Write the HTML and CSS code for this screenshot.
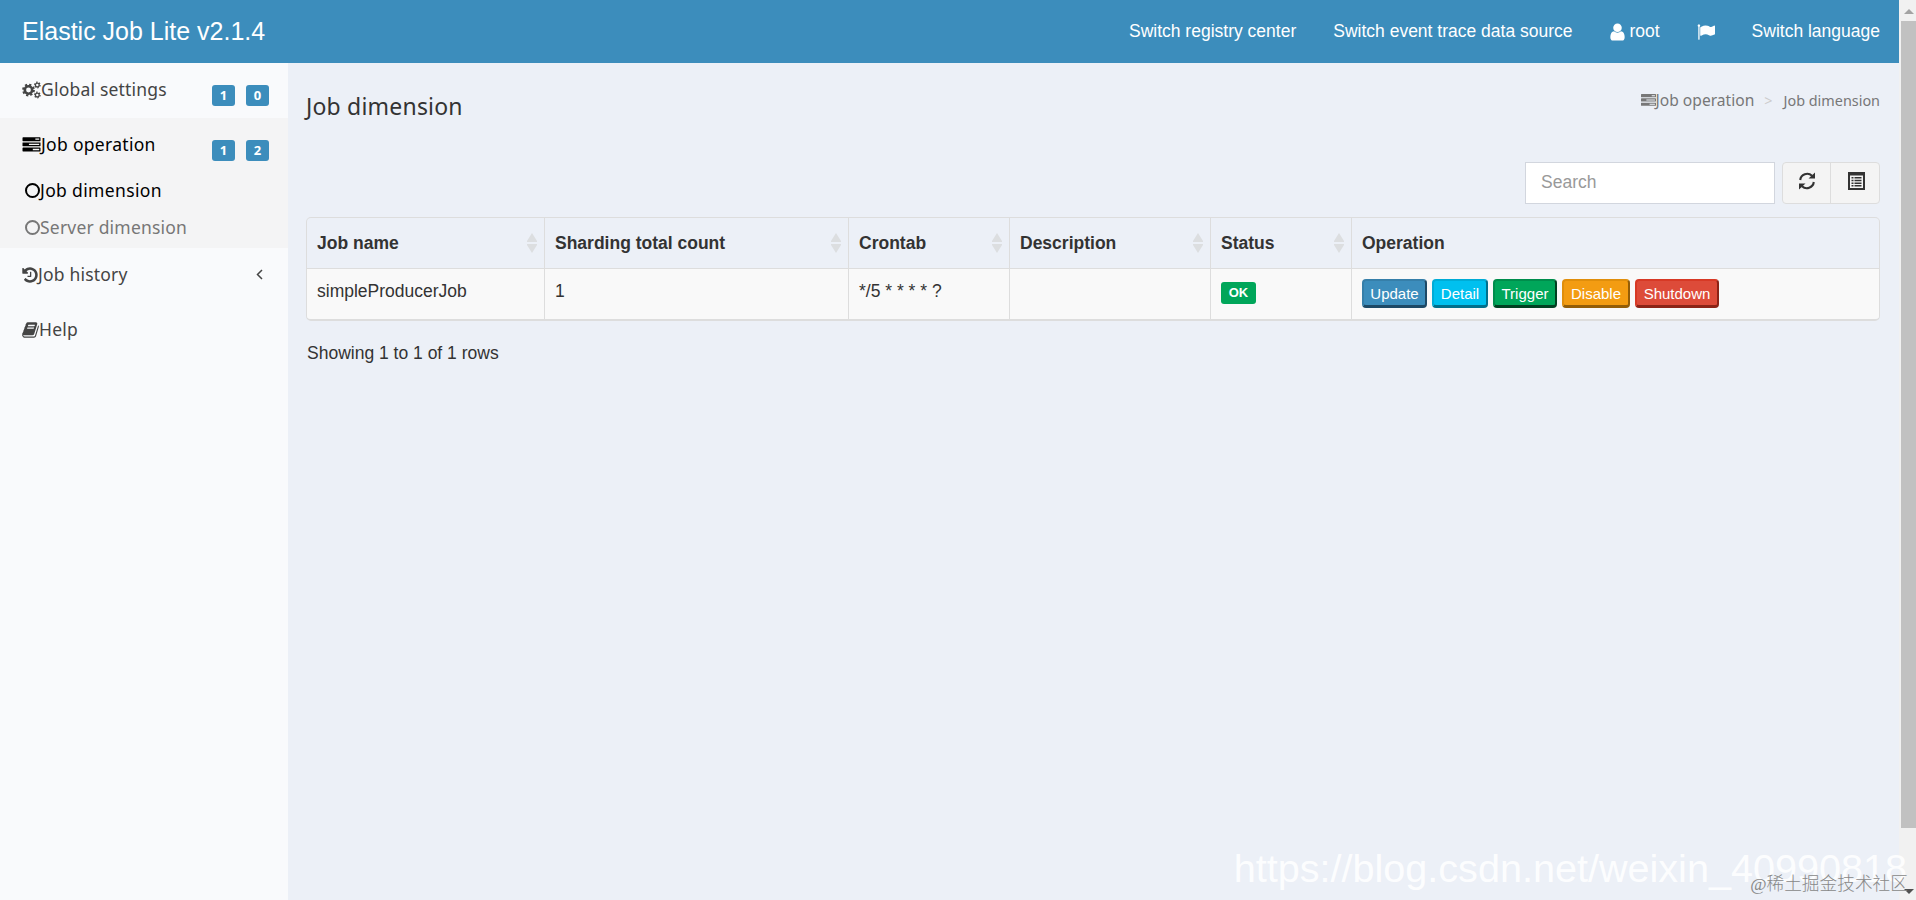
FILE: index.html
```html
<!DOCTYPE html>
<html lang="en">
<head>
    <meta charset="UTF-8">
    <meta name="viewport" content="width=device-width, initial-scale=1.0">
    <title>Elastic Job Lite</title>
    <link rel="stylesheet" href="styles.css">
</head>
<body>
    <!-- shared icons -->
    <svg class="defs">
        <symbol id="tasks" viewBox="0 0 1792 1792"><path d="M1024 1408h640v-128h-640v128zm-384-512h1024v-128h-1024v128zm640-512h384v-128h-384v128zm512 832v256q0 26-19 45t-45 19h-1664q-26 0-45-19t-19-45v-256q0-26 19-45t45-19h1664q26 0 45 19t19 45zm0-512v256q0 26-19 45t-45 19h-1664q-26 0-45-19t-19-45v-256q0-26 19-45t45-19h1664q26 0 45 19t19 45zm0-512v256q0 26-19 45t-45 19h-1664q-26 0-45-19t-19-45v-256q0-26 19-45t45-19h1664q26 0 45 19t19 45z"/></symbol>
        <symbol id="cogs" viewBox="0 0 19 18">
            <g fill="none" stroke="currentColor">
                <circle cx="6.5" cy="9" r="3.7" stroke-width="2.6"/>
                <circle cx="6.5" cy="9" r="5.4" stroke-width="2" stroke-dasharray="2.2 2.04"/>
                <circle cx="15.3" cy="4" r="1.9" stroke-width="1.3"/>
                <circle cx="15.3" cy="4" r="2.8" stroke-width="1.2" stroke-dasharray="1.4 1.53"/>
                <circle cx="15.3" cy="14" r="1.9" stroke-width="1.3"/>
                <circle cx="15.3" cy="14" r="2.8" stroke-width="1.2" stroke-dasharray="1.4 1.53"/>
            </g>
        </symbol>
        <symbol id="sort" viewBox="0 0 10 20"><path d="M5 0l5 8v1H0V8zM0 11h10v1l-5 8-5-8z"/></symbol>
    </svg>

    <header class="main-header">
        <div class="logo">Elastic Job Lite v2.1.4</div>
        <nav class="nav">
            <a>Switch registry center</a>
            <a>Switch event trace data source</a>
            <a><svg class="user" viewBox="256 0 1280 1792"><path d="M1536 1399q0 109-62.5 187t-150.5 78h-854q-88 0-150.5-78t-62.5-187q0-85 8.5-160.5t31.5-152 58.5-131 94-89 134.5-34.5q131 128 313 128t313-128q76 0 134.5 34.5t94 89 58.5 131 31.5 152 8.5 160.5zm-256-887q0 159-112.5 271.5t-271.5 112.5-271.5-112.5-112.5-271.5 112.5-271.5 271.5-112.5 271.5 112.5 112.5 271.5z"/></svg> root</a>
            <a><svg class="flag" viewBox="0 0 1792 1792"><path d="M320 256q0 72-64 110v1266q0 13-9.5 22.5t-22.5 9.5h-64q-13 0-22.5-9.5t-9.5-22.5v-1266q-64-38-64-110 0-53 37.5-90.5t90.5-37.5 90.5 37.5 37.5 90.5zm1472 64v763q0 25-12.5 38.5t-39.5 27.5q-215 116-369 116-61 0-123.5-22t-108.5-48-115.5-48-142.5-22q-192 0-464 146-17 9-33 9-26 0-45-19t-19-45v-742q0-32 31-55 21-14 79-43 236-120 421-120 107 0 200 29t219 88q38 19 88 19 54 0 117.5-21t110-47 88-47 54.5-21q26 0 45 19t19 45z"/></svg></a>
            <a>Switch language</a>
        </nav>
    </header>

    <div class="wrapper">
        <aside class="sidebar">
            <div class="item">
                <svg class="cogs"><use href="#cogs"/></svg><span>Global settings</span>
                <div class="labels"><b>1</b><b>0</b></div>
            </div>
            <div class="item active">
                <svg class="tasks"><use href="#tasks"/></svg><span>Job operation</span>
                <div class="labels"><b>1</b><b>2</b></div>
            </div>
            <div class="submenu">
                <div class="current"><i class="circle"></i>Job dimension</div>
                <div><i class="circle"></i>Server dimension</div>
            </div>
            <div class="item">
                <svg class="history" viewBox="128 0 1536 1792"><path d="M1664 896q0 156-61 298t-164 245-245 164-298 61q-172 0-327-72.5t-264-204.5q-7-10-6.5-22.5t8.5-20.5l137-138q10-9 25-9 16 2 23 12 73 95 179 147t225 52q104 0 198.5-40.5t163.5-109.5 109.5-163.5 40.5-198.5-40.5-198.5-109.5-163.5-163.5-109.5-198.5-40.5q-98 0-188 35.5t-160 101.5l137 138q31 30 14 69-17 40-59 40h-448q-26 0-45-19t-19-45v-448q0-42 40-59 39-17 69 14l130 129q107-101 244.5-156.5t284.5-55.5q156 0 298 61t245 164 164 245 61 298zm-640-288v448q0 14-9 23t-23 9h-320q-14 0-23-9t-9-23v-64q0-14 9-23t23-9h224v-352q0-14 9-23t23-9h64q14 0 23 9t9 23z"/></svg><span>Job history</span>
                <svg class="angle" viewBox="0 0 7 11"><path d="M6 1L1.5 5.5 6 10"/></svg>
            </div>
            <div class="item">
                <svg class="book" viewBox="64 0 1664 1792"><path d="M1703 478q40 57 18 129l-275 906q-19 64-76.5 107.5t-122.5 43.5h-923q-77 0-148.5-53.5t-99.5-131.5q-24-67-2-127 0-4 3-27t4-37q1-8-3-21.5t-3-19.5q2-11 8-21t16.5-23.5 16.5-23.5q23-38 45-91.5t30-91.5q3-10 .5-30t-.5-28q3-11 17-28t17-23q21-36 42-92t25-90q1-9-2.5-32t.5-28q4-13 22-30.5t22-22.5q19-26 42.5-84.5t27.5-96.5q1-8-3-25.5t-2-26.5q2-8 9-18t18-23 17-21q8-12 16.5-30.5t15-35 16-36 19.5-32 26.5-23.5 36-11.5 47.5 5.5l-1 3q38-9 51-9h761q74 0 114 56t18 130l-274 906q-36 119-71.5 153.5t-128.5 34.5h-869q-27 0-38 15-11 16-1 43 24 70 144 70h923q29 0 56-15.5t35-41.5l300-987q7-22 5-57 38 15 59 43zm-1064 2q-4 13 2 22.5t20 9.5h608q13 0 25.5-9.5t16.5-22.5l21-64q4-13-2-22.5t-20-9.5h-608q-13 0-25.5 9.5t-16.5 22.5zm-83 256q-4 13 2 22.5t20 9.5h608q13 0 25.5-9.5t16.5-22.5l21-64q4-13-2-22.5t-20-9.5h-608q-13 0-25.5 9.5t-16.5 22.5z"/></svg><span>Help</span>
            </div>
        </aside>

        <main class="content">
            <div class="content-header">
                <h1>Job dimension</h1>
                <div class="breadcrumb">
                    <svg><use href="#tasks"/></svg><span class="parent">Job operation</span>
                    <span class="sep">&gt;</span>
                    <span>Job dimension</span>
                </div>
            </div>

            <div class="toolbar">
                <input type="text" placeholder="Search">
                <div class="btn-group">
                    <button>
                        <svg class="refresh" viewBox="0 0 18 18"><path d="M2.2 8A7 7 0 0 1 14 3.8M15.8 10A7 7 0 0 1 4 14.2" fill="none" stroke="currentColor" stroke-width="2.1"/><path d="M17 0.5v6h-6.500zM1 17.500v-6h6.500z"/></svg>
                    </button>
                    <button>
                        <svg class="list" viewBox="0 0 17 18"><path fill-rule="evenodd" d="M0 0h17v18H0zM2 3.5v12.5h13V3.5z"/><path d="M3.5 5h2v1.5h-2zM6.5 5h7v1.5h-7zM3.5 7.7h2v1.5h-2zM6.5 7.7h7v1.5h-7zM3.5 10.4h2v1.5h-2zM6.5 10.4h7v1.5h-7zM3.5 13.1h2v1.5h-2zM6.5 13.1h7v1.5h-7z"/></svg>
                    </button>
                </div>
            </div>

            <div class="table-box">
                <table>
                    <colgroup>
                        <col class="c-name"><col class="c-count"><col class="c-cron"><col class="c-desc"><col class="c-status"><col>
                    </colgroup>
                    <thead>
                        <tr>
                            <th><div>Job name<svg><use href="#sort"/></svg></div></th>
                            <th><div>Sharding total count<svg><use href="#sort"/></svg></div></th>
                            <th><div>Crontab<svg><use href="#sort"/></svg></div></th>
                            <th><div>Description<svg><use href="#sort"/></svg></div></th>
                            <th><div>Status<svg><use href="#sort"/></svg></div></th>
                            <th><div>Operation</div></th>
                        </tr>
                    </thead>
                    <tbody>
                        <tr>
                            <td>simpleProducerJob</td>
                            <td>1</td>
                            <td>*/5 * * * * ?</td>
                            <td></td>
                            <td><span class="ok">OK</span></td>
                            <td>
                                <div class="actions">
                                    <button class="primary">Update</button>
                                    <button class="info">Detail</button>
                                    <button class="success">Trigger</button>
                                    <button class="warning">Disable</button>
                                    <button class="danger">Shutdown</button>
                                </div>
                            </td>
                        </tr>
                    </tbody>
                </table>
            </div>
            <div class="pagination">Showing 1 to 1 of 1 rows</div>
        </main>
    </div>

    <div class="scrollbar">
        <i class="up"></i>
        <div class="thumb"></div>
        <i class="down"></i>
    </div>
    <div class="watermark">https://blog.csdn.net/weixin_40990818</div>
    <div class="community">@稀土掘金技术社区</div>
</body>
</html>
```

FILE: styles.css
```css
* {
    box-sizing: border-box;
}

body {
    margin: 0;
    height: 900px;
    padding-right: 17px;
    overflow: hidden;
    background: #ecf0f7;
    color: #333;
    font: 17.5px/25px "Liberation Sans", Arial, sans-serif;
}

svg {
    fill: currentColor;
    flex: none;
}

.defs {
    display: none;
}

.main-header {
    display: flex;
    justify-content: space-between;
    height: 63px;
    background: #3c8dbc;
    color: #fff;
}

.logo {
    padding-left: 22px;
    font-size: 25px;
    line-height: 63px;
}

.nav {
    display: flex;
}

.nav a {
    display: flex;
    align-items: center;
    padding: 0 18.5px;
    white-space: pre;
}

.nav a:last-child {
    padding-right: 19px;
}

.user {
    width: 15px;
    height: 20px;
}

.flag {
    width: 18px;
    height: 18px;
}

.wrapper {
    display: flex;
    height: 837px;
}

/* sidebar */
.sidebar {
    width: 288px;
    background: #f9fafc;
    color: #444;
    font-family: "Noto Sans", "Open Sans", sans-serif;
    letter-spacing: 0.2px;
}

.item {
    display: flex;
    align-items: center;
    height: 55px;
    padding: 0 19px 2px 22px;
}

.item span {
    flex: 1;
}

.item.active {
    background: #f4f4f5;
    color: #000;
    letter-spacing: 0.3px;
}

.cogs,
.tasks {
    width: 19px;
    height: 18px;
}

.history {
    width: 16px;
    height: 18px;
}

.book {
    width: 17px;
    height: 18px;
}

.labels {
    display: flex;
    gap: 11px;
    padding-top: 12px;
}

.labels b {
    width: 23px;
    height: 21px;
    border-radius: 3px;
    background: #3c8dbc;
    color: #fff;
    font: bold 13px/21px "Open Sans", sans-serif;
    letter-spacing: 0;
    text-align: center;
}

.angle {
    width: 7px;
    height: 11px;
    margin-right: 6px;
    fill: none;
    stroke: currentColor;
    stroke-width: 1.5;
}

.submenu {
    height: 75px;
    padding-left: 25px;
    background: #f4f4f5;
    color: #777;
}

.submenu div {
    display: flex;
    align-items: center;
    height: 37px;
    padding-bottom: 2px;
}

.submenu .current {
    color: #000;
    letter-spacing: 0.35px;
}

.circle {
    width: 15px;
    height: 15px;
    border: 2.5px solid;
    border-radius: 50%;
}

/* content */
.content {
    flex: 1;
    padding: 0 19px 0 18px;
}

.content-header {
    display: flex;
    justify-content: space-between;
    height: 99px;
    font-family: "Noto Sans", "Open Sans", sans-serif;
}

h1 {
    margin: 30px 0 0;
    font-size: 23px;
    font-weight: 400;
    line-height: 26px;
    letter-spacing: 0.2px;
}

.breadcrumb {
    display: flex;
    align-items: center;
    height: 25px;
    margin-top: 25px;
    color: #777;
    font-size: 14.4px;
}

.breadcrumb svg {
    width: 15px;
    height: 15px;
}

.parent {
    font-size: 15.6px;
}

.sep {
    padding: 0 11px 0 10px;
    color: #ccc;
}

.toolbar {
    display: flex;
    justify-content: flex-end;
    gap: 7px;
    height: 42px;
}

.toolbar input {
    width: 250px;
    padding: 0 15px 2px;
    border: 1px solid #d2d6de;
    background: #fff;
    font: inherit;
}

.toolbar input::placeholder {
    color: #999;
}

.btn-group {
    display: flex;
    width: 98px;
    border: 1px solid #ddd;
    border-radius: 4px;
    background: #f4f4f4;
}

.btn-group button {
    display: flex;
    width: 47px;
    align-items: center;
    justify-content: center;
    padding: 0 0 4px;
    border: 0;
    background: none;
    color: #333;
}

.btn-group button + button {
    width: 49px;
    padding-left: 2px;
    border-left: 1px solid #ddd;
}

.refresh {
    width: 18px;
    height: 18px;
}

.list {
    width: 17px;
    height: 18px;
}

.table-box {
    height: 104px;
    margin-top: 13px;
    border: 1px solid #ddd;
    border-bottom-width: 2px;
    border-radius: 5px;
    overflow: hidden;
}

table {
    width: 100%;
    border-collapse: separate;
    border-spacing: 0;
    table-layout: fixed;
}

.c-name { width: 238px; }
.c-count { width: 304px; }
.c-cron { width: 161px; }
.c-desc { width: 201px; }
.c-status { width: 141px; }

th,
td {
    border-right: 1px solid #ddd;
    text-align: left;
}

th:last-child,
td:last-child {
    border-right: 0;
}

th {
    height: 51px;
    padding: 0 7px 0 10px;
    border-bottom: 1px solid #ddd;
}

th div {
    display: flex;
    align-items: center;
    justify-content: space-between;
    white-space: nowrap;
}

th svg {
    width: 10px;
    height: 20px;
    color: #dcdee0;
}

td {
    height: 51px;
    padding: 10px;
    background: #f9f9f9;
    vertical-align: top;
}

.ok {
    display: block;
    width: 35px;
    height: 22px;
    margin-top: 3px;
    border-radius: 3px;
    background: #00a65a;
    color: #fff;
    font-size: 13px;
    font-weight: bold;
    line-height: 21px;
    text-align: center;
}

.actions {
    display: flex;
    gap: 5px;
}

.actions button {
    height: 29px;
    padding: 1px 0 0;
    border: 2px solid;
    border-bottom-width: 3px;
    border-radius: 4px;
    color: #fff;
    font: 15px/23px "Liberation Sans", Arial, sans-serif;
}

.actions .primary { width: 65px; background: #3c8dbc; border-color: #367fa9 #1d4966 #1d4966 #367fa9; }
.actions .info { width: 56px; background: #00c0ef; border-color: #00acd6 #006f8c #006f8c #00acd6; }
.actions .success { width: 64px; background: #00a65a; border-color: #008d4c #004021 #004021 #008d4c; }
.actions .warning { width: 68px; background: #f39c12; border-color: #e08e0b #935d07 #935d07 #e08e0b; }
.actions .danger { width: 84px; background: #dd4b39; border-color: #d73925 #8c2316 #8c2316 #d73925; }

.pagination {
    padding: 20px 1px;
}

/* page scrollbar */
.scrollbar {
    position: absolute;
    top: 0;
    right: 0;
    display: flex;
    flex-direction: column;
    align-items: center;
    justify-content: space-between;
    width: 17px;
    height: 900px;
    padding: 9px 0 6px;
    background: #f1f1f1;
}

.thumb {
    width: 15px;
    height: 807px;
    margin: 7px 0 auto 2px;
    background: #c1c1c1;
}

.up,
.down {
    margin-left: 3px;
    border: 5px solid transparent;
}

.up {
    border-top: 0;
    border-bottom-color: #a3a3a3;
}

.down {
    border-bottom: 0;
    border-top-color: #505050;
}

.watermark {
    position: absolute;
    right: 9px;
    bottom: 9px;
    color: rgba(255, 255, 255, 0.9);
    font-size: 39.6px;
    line-height: 46px;
}

.community {
    position: absolute;
    right: 8px;
    bottom: 4px;
    color: #888;
    font: 17.7px/24px "Liberation Serif", "Noto Sans CJK SC", serif;
    font-weight: 300;
}
```
